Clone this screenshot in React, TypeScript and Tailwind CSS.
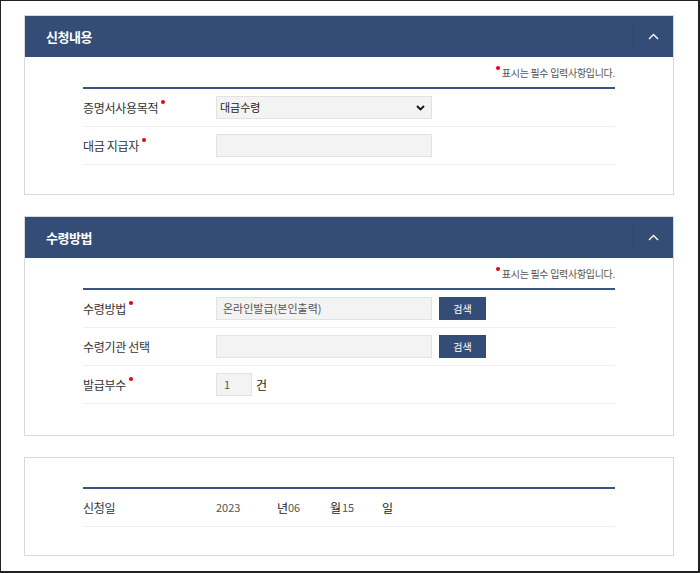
import { type ReactNode } from "react";

const font = { fontFamily: '"Noto Sans CJK KR", "Noto Sans", sans-serif' };

function RequiredDot() {
  return <span className="ml-[3px] inline-block size-[4px] -translate-y-[9px] rounded-full bg-[#e60012]" />;
}

function CardHeader({ title }: { title: string }) {
  return (
    <div className="flex h-[41px] items-center bg-[#344d77]">
      <h3 className="flex-1 pl-[21px] text-[13px] font-bold tracking-[-0.5px] text-white">{title}</h3>
      <div className="h-[28px] w-px bg-[#2e4670]" />
      <button className="flex h-full w-[39px] items-center justify-center" aria-label="접기">
        <svg width="11" height="7" viewBox="0 0 11 7" fill="none">
          <path d="M1 6L5.5 1.5L10 6" stroke="white" strokeWidth="1.4" />
        </svg>
      </button>
    </div>
  );
}

function RequiredNote() {
  return (
    <div className="flex h-[30px] items-center justify-end">
      <span className="inline-block size-[4px] -translate-y-[4px] rounded-full bg-[#e60012]" />
      <span className="ml-[2px] text-[10px] tracking-[-0.3px] text-[#555]">표시는 필수 입력사항입니다.</span>
    </div>
  );
}

function Row({ label, required, children }: { label: string; required?: boolean; children?: ReactNode }) {
  return (
    <div className="flex h-[38px] items-center border-b border-[#efefef]">
      <div className="w-[133px] text-[12px] tracking-[-0.3px] text-[#333]">
        {label}
        {required ? <RequiredDot /> : null}
      </div>
      <div className="flex items-center">{children}</div>
    </div>
  );
}

function TextBox({ value, className = "w-[216px]" }: { value?: string; className?: string }) {
  return (
    <div className={`flex h-[23px] items-center border border-[#e2e2e2] bg-[#f3f3f3] px-[6px] text-[11px] text-[#555] ${className}`}>
      {value}
    </div>
  );
}

function SearchButton() {
  return (
    <button className="ml-[7px] flex h-[23px] w-[47px] items-center justify-center bg-[#344d77] text-[10px] text-white">
      검색
    </button>
  );
}

export default function App() {
  return (
    <div
      className="flex h-[573px] w-[700px] flex-col gap-[21px] border-t border-r-2 border-b-2 border-l border-[#222] bg-white pt-[14px] pl-[23px]"
      style={font}
    >
      <section className="w-[650px] border border-[#d9d9d9]">
        <CardHeader title="신청내용" />
        <div className="px-[58px] pb-[29px]">
          <RequiredNote />
          <div className="h-[2px] bg-[#3b5482]" />
          <Row label="증명서사용목적" required>
            <div className="flex h-[23px] w-[216px] items-center justify-between border border-[#e2e2e2] bg-[#f3f3f3] pr-[6px] pl-[3px] text-[11px] text-[#222]">
              <span>대금수령</span>
              <svg width="9" height="6" viewBox="0 0 9 6" fill="none">
                <path d="M1 1L4.5 4.5L8 1" stroke="#111" strokeWidth="1.8" />
              </svg>
            </div>
          </Row>
          <Row label="대금 지급자" required>
            <TextBox />
          </Row>
        </div>
      </section>

      <section className="w-[650px] border border-[#d9d9d9]">
        <CardHeader title="수령방법" />
        <div className="px-[58px] pb-[31px]">
          <RequiredNote />
          <div className="h-[2px] bg-[#3b5482]" />
          <Row label="수령방법" required>
            <TextBox value="온라인발급(본인출력)" />
            <SearchButton />
          </Row>
          <Row label="수령기관 선택">
            <TextBox />
            <SearchButton />
          </Row>
          <Row label="발급부수" required>
            <TextBox value="1" className="w-[36px] px-[7px]" />
            <span className="ml-[4px] text-[12px] text-[#222]">건</span>
          </Row>
        </div>
      </section>

      <section className="w-[650px] border border-[#d9d9d9]">
        <div className="px-[58px] pt-[29px] pb-[28px]">
          <div className="h-[2px] bg-[#3b5482]" />
          <Row label="신청일">
            <span className="w-[61px] text-[11px] text-[#555]">2023</span>
            <span className="w-[11px] text-[12px] text-[#222]">년</span>
            <span className="w-[42px] text-[11px] text-[#555]">06</span>
            <span className="w-[12px] text-[12px] text-[#222]">월</span>
            <span className="w-[40px] text-[11px] text-[#555]">15</span>
            <span className="text-[12px] text-[#222]">일</span>
          </Row>
        </div>
      </section>
    </div>
  );
}
